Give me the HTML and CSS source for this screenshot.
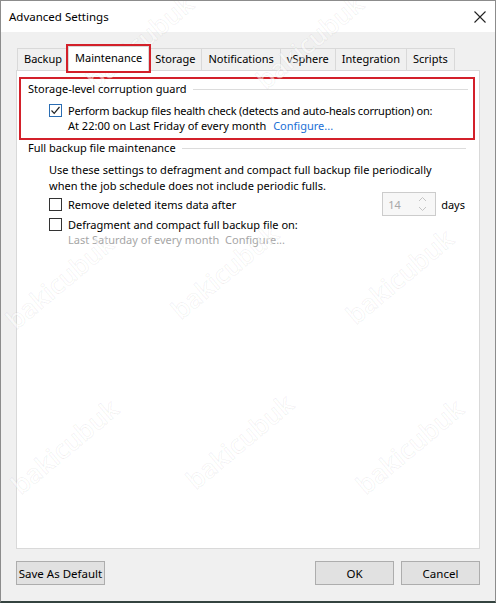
FILE: index.html
```html
<!DOCTYPE html>
<html lang="en">
<head>
    <meta charset="UTF-8">
    <title>Advanced Settings</title>
    <link rel="stylesheet" href="styles.css">
</head>
<body>
    <div class="window">
        <div class="titlebar">
            <span class="title">Advanced Settings</span>
            <svg class="close" width="12" height="12" viewBox="0 0 12 12">
                <path d="M0.5 0.5 L11.5 11.5 M11.5 0.5 L0.5 11.5" stroke="#222" stroke-width="1.1" fill="none"/>
            </svg>
        </div>

        <div class="content">
            <div class="tabs">
                <div class="tab">Backup</div>
                <div class="tab active">Maintenance</div>
                <div class="tab">Storage</div>
                <div class="tab">Notifications</div>
                <div class="tab">vSphere</div>
                <div class="tab">Integration</div>
                <div class="tab">Scripts</div>
            </div>

            <div class="panel">
                <!-- storage-level guard, highlighted in red -->
                <div class="group guard">
                    <div class="group-title">Storage-level corruption guard</div>
                    <div class="check-row">
                        <span class="box checked">
                            <svg width="11" height="11" viewBox="0 0 11 11">
                                <path d="M1.5 5.5 L4.2 8.3 L9.5 2" stroke="#222" stroke-width="1.2" fill="none"/>
                            </svg>
                        </span>
                        <div class="check-text">
                            <div class="tight">Perform backup files health check (detects and auto-heals corruption) on:</div>
                            <div>At 22:00 on Last Friday of every month <a class="link">Configure...</a></div>
                        </div>
                    </div>
                </div>

                <div class="group full">
                    <div class="group-title">Full backup file maintenance</div>
                    <p class="note">Use these settings to defragment and compact full backup file periodically when the job schedule does not include periodic fulls.</p>
                    <div class="check-row spin-row">
                        <span class="box"></span>
                        <span class="check-label">Remove deleted items data after</span>
                        <div class="spinner">
                            <span class="spin-value">14</span>
                            <span class="spin-arrows">
                                <svg width="9" height="16" viewBox="0 0 9 16">
                                    <path d="M1 5 L4.5 1.5 L8 5 M1 11 L4.5 14.5 L8 11" stroke="#c4c4c4" stroke-width="1" fill="none"/>
                                </svg>
                            </span>
                        </div>
                        <span class="unit">days</span>
                    </div>
                    <div class="check-row">
                        <span class="box"></span>
                        <div class="check-text">
                            <div>Defragment and compact full backup file on:</div>
                            <div class="disabled">Last Saturday of every month&nbsp; Configure...</div>
                        </div>
                    </div>
                </div>
            </div>

            <div class="buttons">
                <button class="btn wide">Save As Default</button>
                <span class="spacer"></span>
                <button class="btn">OK</button>
                <button class="btn">Cancel</button>
            </div>
        </div>

        <div class="watermarks" aria-hidden="true">
            <span class="wm" style="left: 100px; top: 60px;">bakicubuk</span>
            <span class="wm" style="left: 270px; top: 60px;">bakicubuk</span>
            <span class="wm" style="left: 20px; top: 300px;">bakicubuk</span>
            <span class="wm" style="left: 185px; top: 290px;">bakicubuk</span>
            <span class="wm" style="left: 360px; top: 295px;">bakicubuk</span>
            <span class="wm" style="left: 25px; top: 465px;">bakicubuk</span>
            <span class="wm" style="left: 200px; top: 460px;">bakicubuk</span>
            <span class="wm" style="left: 370px; top: 465px;">bakicubuk</span>
        </div>
    </div>
</body>
</html>
```

FILE: styles.css
```css
* {
    box-sizing: border-box;
}

body {
    margin: 0;
    font-family: 'Noto Sans', 'Liberation Sans', sans-serif;
    font-size: 11px;
    color: #000;
}

.window {
    position: relative;
    width: 496px;
    height: 603px;
    background-color: #f0f0f0;
    border: 1px solid #8c8c8c;
    border-bottom: 2px solid #34433f;
    overflow: hidden;
}

.titlebar {
    height: 31px;
    background-color: white;
    display: flex;
    align-items: center;
    justify-content: space-between;
    padding: 0 9px 0 8px;
}

.title {
    font-size: 11.5px;
}

.content {
    padding: 15px 15px 0 15px;
}

.tabs {
    display: flex;
    align-items: flex-end;
    padding-left: 2px;
    height: 23px;
}

.tab {
    height: 22px;
    line-height: 19px;
    padding: 0 6px;
    border: 1px solid #d9d9d9;
    border-bottom: none;
    margin-left: -1px;
    background-color: #f0f0f0;
    white-space: nowrap;
}

.tab.active {
    height: 25px;
    line-height: 22px;
    background-color: white;
    margin-bottom: -1px;
    position: relative;
    z-index: 1;
    outline: 2px solid #d3202a;
    outline-offset: 0;
}

.panel {
    height: 479px;
    background-color: white;
    border: 1px solid #d9d9d9;
    padding: 6px 4px 0 2px;
}

.group-title {
    display: flex;
    align-items: center;
    height: 16px;
    line-height: 16px;
}

.group-title::after {
    content: "";
    flex: 1;
    height: 1px;
    background-color: #dcdcdc;
    margin-left: 6px;
}

.guard {
    border: 2px solid #d3202a;
    padding: 2px 5px 5px 7px;
}

.guard .check-row {
    margin-top: 6px;
}

.full {
    padding: 0 9px 0 9px;
}

.check-row {
    display: flex;
    align-items: flex-start;
    margin-top: 5px;
    padding-left: 21px;
    line-height: 15px;
}

.tight {
    letter-spacing: -0.2px;
}

.box {
    width: 13px;
    height: 13px;
    border: 1px solid #333;
    background-color: white;
    margin-top: 1px;
    margin-right: 6px;
    flex-shrink: 0;
    display: flex;
    align-items: center;
    justify-content: center;
}

.box.checked {
    border-color: #2a6db3;
}

.link {
    color: #1a6fd6;
    margin-left: 4px;
}

.note {
    margin: 6px 0 0 21px;
    line-height: 16px;
    width: 400px;
}

.spin-row {
    align-items: center;
    margin-top: -2px;
    height: 24px;
}

.spin-row .box {
    margin-top: 0;
}

.check-label {
    flex: 1;
}

.spinner {
    width: 54px;
    height: 24px;
    border: 1px solid #cccccc;
    background-color: #f7f7f7;
    display: flex;
    align-items: center;
    justify-content: space-between;
    padding: 0 8px 0 5px;
    color: #a8a8a8;
}

.spin-arrows {
    display: flex;
}

.unit {
    margin-left: 5px;
    margin-right: 1px;
}

.spin-row + .check-row {
    margin-top: 1px;
}

.disabled {
    color: #a6a6a6;
}

.buttons {
    display: flex;
    margin-top: 12px;
}

.spacer {
    flex: 1;
}

.btn {
    font-family: inherit;
    font-size: 11.5px;
    height: 24px;
    width: 79px;
    background-color: #e1e1e1;
    border: 1px solid #adadad;
    padding: 0;
    margin-left: 7px;
    color: #000;
    white-space: nowrap;
}

.btn.wide {
    width: 89px;
    margin-left: 0;
}

.watermarks {
    position: absolute;
    inset: 0;
    pointer-events: none;
}

.wm {
    position: absolute;
    font-family: 'Open Sans', sans-serif;
    font-size: 26px;
    font-weight: 600;
    color: rgba(255, 255, 255, 0.5);
    -webkit-text-stroke: 1px rgba(0, 0, 0, 0.06);
    transform: rotate(-40deg);
    transform-origin: left bottom;
}
```
